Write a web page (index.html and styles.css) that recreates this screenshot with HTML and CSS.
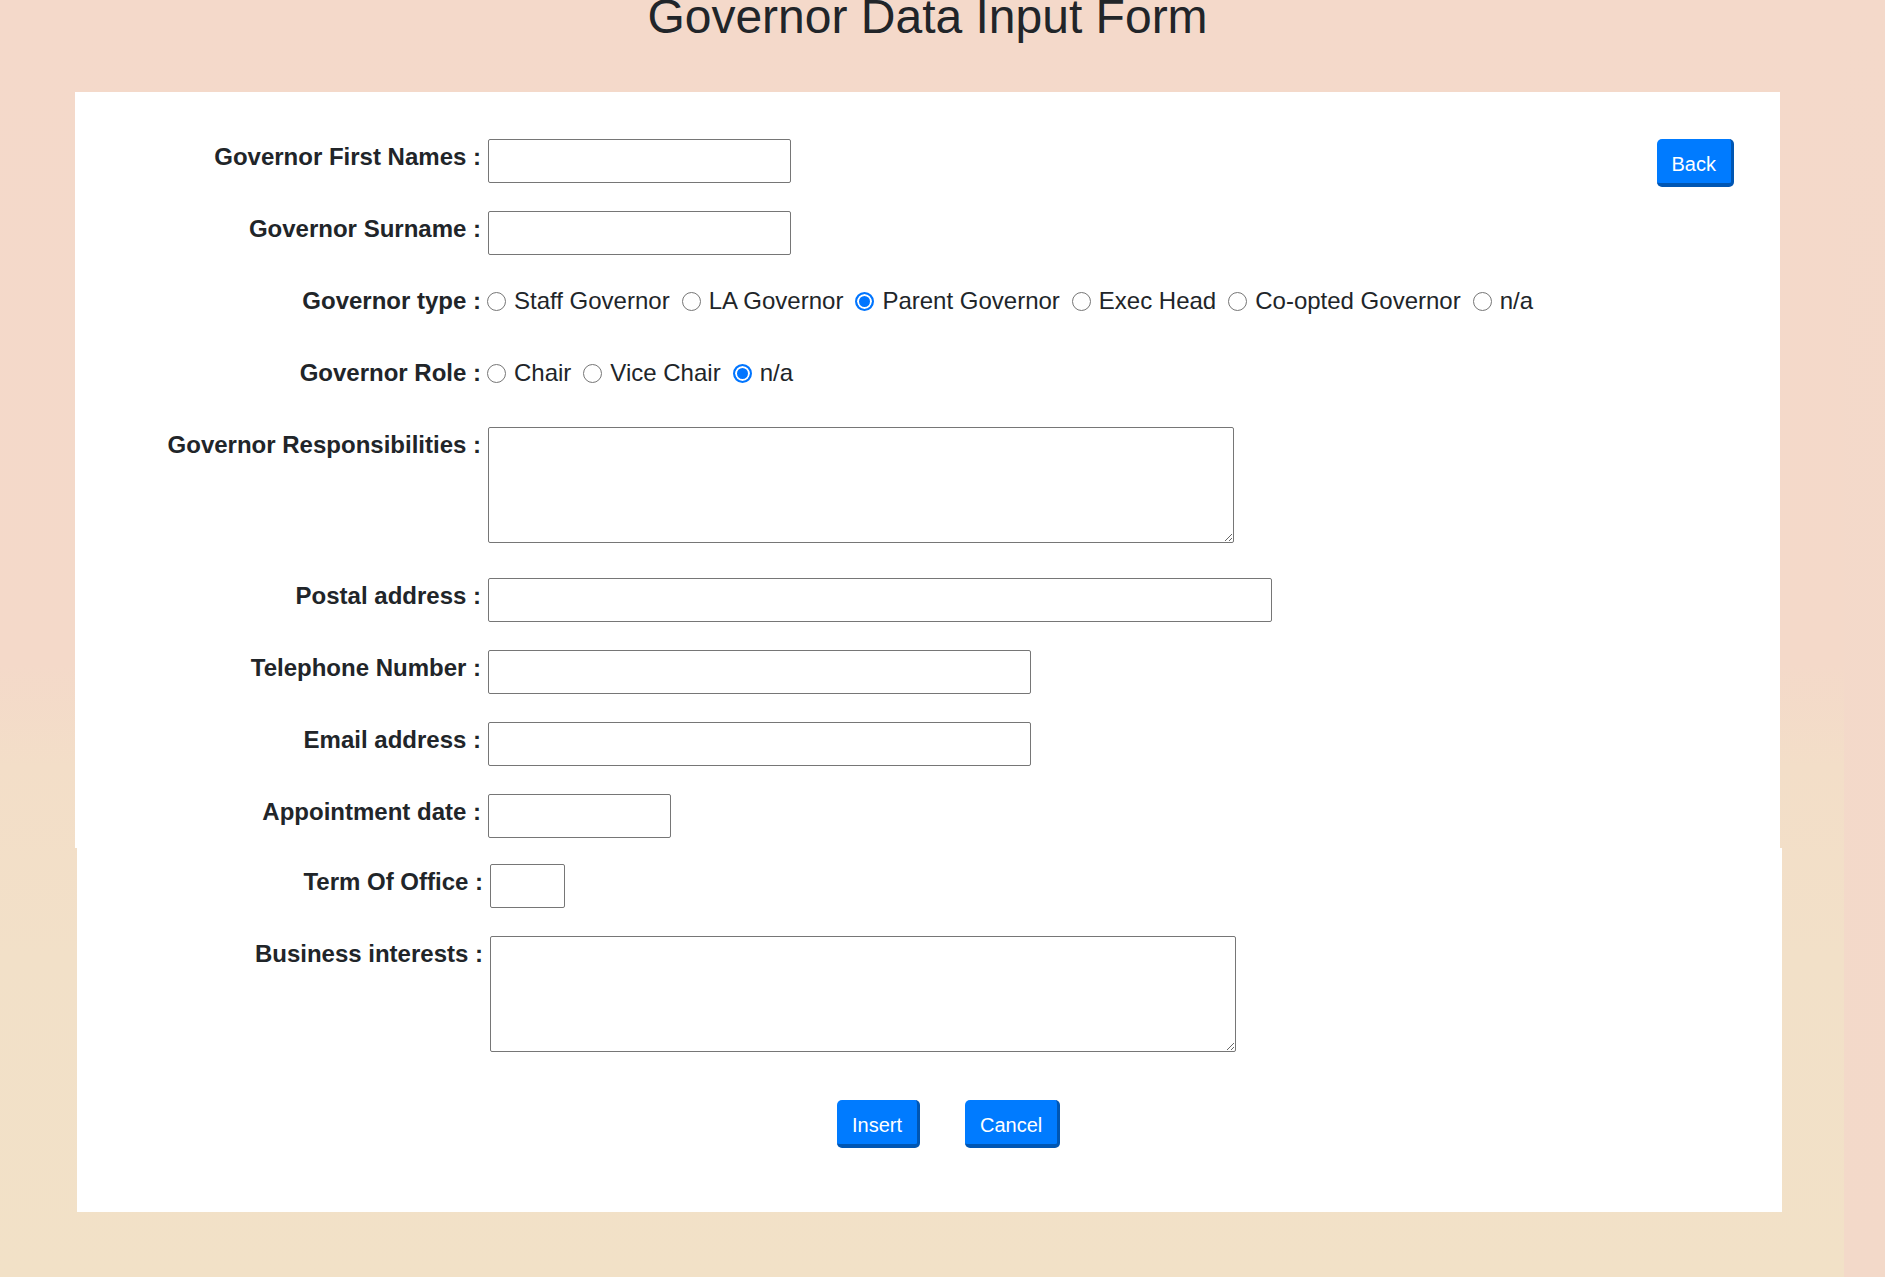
FILE: index.html
```html
<!DOCTYPE html>
<html lang="en">
<head>
<meta charset="utf-8">
<title>Governor Data Input Form</title>
<link rel="stylesheet" href="styles.css">
</head>
<body>
<div class="page">
  <div class="main">
    <h1 class="title">Governor Data Input Form</h1>
    <form class="sheet">
      <div class="panel panel-top">
        <div class="row">
          <label class="lbl">Governor First Names :</label>
          <input class="field w-name" type="text">
          <button type="button" class="btn btn-back">Back</button>
        </div>
        <div class="row">
          <label class="lbl">Governor Surname :</label>
          <input class="field w-name" type="text">
        </div>
        <div class="row">
          <label class="lbl">Governor type :</label>
          <div class="opts">
            <label class="opt"><input type="radio" name="gtype" class="radio">Staff Governor</label>
            <label class="opt"><input type="radio" name="gtype" class="radio">LA Governor</label>
            <label class="opt"><input type="radio" name="gtype" class="radio" checked>Parent Governor</label>
            <label class="opt"><input type="radio" name="gtype" class="radio">Exec Head</label>
            <label class="opt"><input type="radio" name="gtype" class="radio">Co-opted Governor</label>
            <label class="opt"><input type="radio" name="gtype" class="radio">n/a</label>
          </div>
        </div>
        <div class="row">
          <label class="lbl">Governor Role :</label>
          <div class="opts">
            <label class="opt"><input type="radio" name="grole" class="radio">Chair</label>
            <label class="opt"><input type="radio" name="grole" class="radio">Vice Chair</label>
            <label class="opt"><input type="radio" name="grole" class="radio" checked>n/a</label>
          </div>
        </div>
        <div class="row row-ta">
          <label class="lbl">Governor Responsibilities :</label>
          <textarea class="field area"></textarea>
        </div>
        <div class="row">
          <label class="lbl">Postal address :</label>
          <input class="field w-postal" type="text">
        </div>
        <div class="row">
          <label class="lbl">Telephone Number :</label>
          <input class="field w-contact" type="text">
        </div>
        <div class="row">
          <label class="lbl">Email address :</label>
          <input class="field w-contact" type="text">
        </div>
        <div class="row">
          <label class="lbl">Appointment date :</label>
          <input class="field w-date" type="text">
        </div>
      </div>
      <div class="panel panel-bottom">
        <div class="row">
          <label class="lbl">Term Of Office :</label>
          <input class="field w-term" type="text">
        </div>
        <div class="row row-ta2">
          <label class="lbl">Business interests :</label>
          <textarea class="field area"></textarea>
        </div>
        <div class="actions">
          <button type="button" class="btn">Insert</button>
          <button type="button" class="btn">Cancel</button>
        </div>
      </div>
    </form>
  </div>
  <div class="strip"></div>
</div>
</body>
</html>
```

FILE: styles.css
```css
html, body {
  margin: 0;
  padding: 0;
}

body {
  font-family: "Liberation Sans", Arial, sans-serif;
  color: #212529;
  background: #f4d9c9;
}

.page {
  display: flex;
  min-height: 1277px;
  overflow: hidden;
  background: linear-gradient(to bottom, #f4d9ca 0%, #f4d9c9 52%, #f3dec8 60%, #f2e0c8 75%, #f2e1c7 100%);
}

.main {
  width: 1844px;
  flex: none;
}

.strip {
  flex: 1;
  background: linear-gradient(to bottom, #f4d9ca 0%, #f3d9c9 100%);
}

.title {
  margin: -12px 0 47px 75px;
  width: 1705px;
  text-align: center;
  font-size: 48px;
  font-weight: 400;
  line-height: 57px;
}

.sheet {
  margin: 0;
}

.panel {
  background: #fff;
  width: 1705px;
  display: flex;
  flex-direction: column;
  box-sizing: border-box;
}

.panel-top {
  margin-left: 75px;
  padding: 47px 0 10px;
  gap: 28px;
}

.panel-bottom {
  margin-left: 77px;
  padding: 16px 0 64px;
  gap: 28px;
}

.row {
  display: flex;
  align-items: flex-start;
  height: 44px;
}

.row-ta {
  height: 123px;
}

.row-ta2 {
  height: 116px;
}

.lbl {
  flex: none;
  width: 406px;
  margin-right: 7px;
  text-align: right;
  font-size: 24px;
  font-weight: 700;
  line-height: 36px;
  box-sizing: border-box;
}

.field {
  box-sizing: border-box;
  height: 44px;
  border: 1px solid #767676;
  border-radius: 2px;
  background: #fff;
  padding: 1px 2px;
  margin: 0;
  font-family: "Liberation Sans", Arial, sans-serif;
  font-size: 20px;
  flex: none;
}

.w-name { width: 303px; }
.w-postal { width: 784px; }
.w-contact { width: 543px; }
.w-date { width: 183px; }
.w-term { width: 75px; }

.area {
  width: 746px;
  height: 116px;
  resize: both;
}

.opts {
  display: flex;
  align-items: center;
  gap: 12px;
  height: 36px;
  margin-left: -1px;
  font-size: 24px;
}

.opt {
  display: inline-flex;
  align-items: center;
  gap: 8px;
  line-height: 36px;
}

.radio {
  appearance: none;
  -webkit-appearance: none;
  width: 19px;
  height: 19px;
  margin: 0;
  box-sizing: border-box;
  border: 1px solid #767676;
  border-radius: 50%;
  background: #fff;
  flex: none;
}

.radio:checked {
  border: 2px solid #0075ff;
  background: #0075ff;
  box-shadow: inset 0 0 0 2px #fff;
}

.btn {
  flex: none;
  font-family: "Liberation Sans", Arial, sans-serif;
  font-size: 20px;
  line-height: 30px;
  color: #fff;
  background: #007bff;
  border: 0;
  border-right: 3px solid #0056b3;
  border-bottom: 4px solid #0056b3;
  border-radius: 5px;
  padding: 10px 15px 4px;
  margin: 0;
}

.btn-back {
  margin-left: auto;
  margin-right: 46px;
}

.actions {
  display: flex;
  gap: 45px;
  padding-left: 760px;
  margin-top: 20px;
}
```
